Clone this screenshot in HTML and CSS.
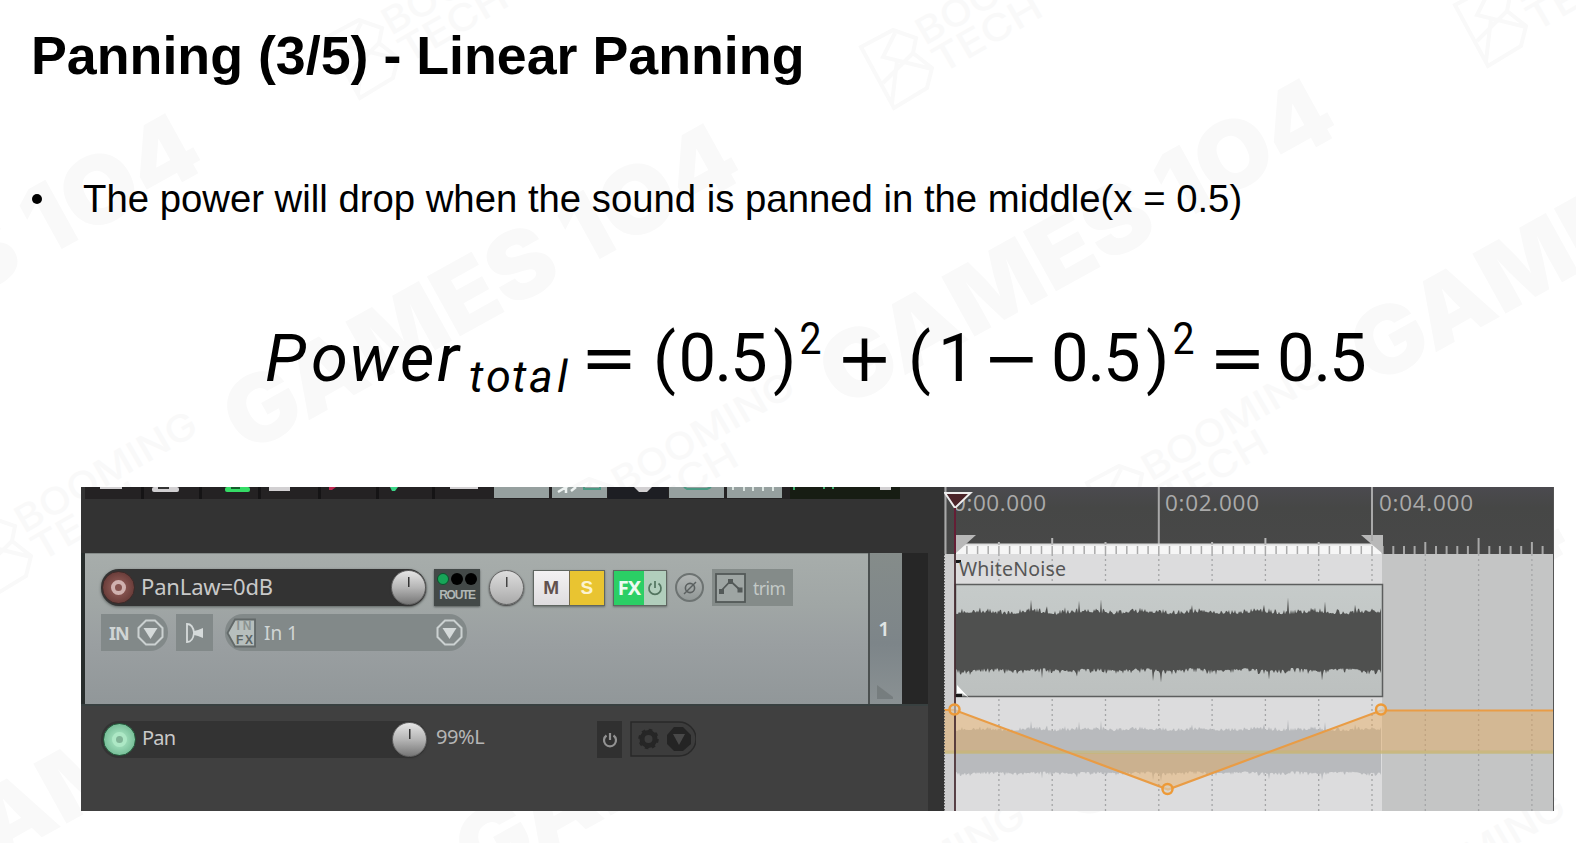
FILE: index.html
```html
<!DOCTYPE html>
<html lang="en">
<head>
<meta charset="utf-8">
<title>Panning (3/5) - Linear Panning</title>
<link rel="stylesheet" href="styles.css">
</head>
<body>
<svg class="watermark" width="1576" height="843" viewBox="0 0 1576 843" aria-hidden="true">
  <defs>
    <g id="games"><text class="wm-games" x="0" y="0" textLength="572" lengthAdjust="spacingAndGlyphs">GAMES 1O4</text></g>
    <g id="brand">
      <path class="wm-logo" d="M0 2L32 -15L55 -7L52 8L71 23L66 43L33 63zM34 -12L22 12L71 24M52 8L22 38M36 16L31 58"/>
      <g transform="translate(64 1) rotate(-30)">
        <text class="wm-booming" x="0" y="0" textLength="204" lengthAdjust="spacingAndGlyphs">BOOMING</text>
        <text class="wm-booming" x="0" y="33" textLength="120" lengthAdjust="spacingAndGlyphs">TECH</text>
      </g>
    </g>
  </defs>
  <use href="#games" transform="translate(-292 445) rotate(-29)"/>
  <use href="#games" transform="translate(246 455) rotate(-29)"/>
  <use href="#games" transform="translate(842 410) rotate(-29)"/>
  <use href="#games" transform="translate(1373 387) rotate(-29)"/>
  <use href="#games" transform="translate(-66 897) rotate(-29)"/>
  <use href="#games" transform="translate(478 889) rotate(-29)"/>
  <use href="#games" transform="translate(1073 826) rotate(-29)"/>
  <use href="#brand" x="861" y="45"/>
  <use href="#brand" x="1455" y="3"/>
  <use href="#brand" x="327" y="35"/>
  <use href="#brand" x="557" y="494"/>
  <use href="#brand" x="1087" y="481"/>
  <use href="#brand" x="-40" y="533"/>
  <use href="#brand" x="788" y="923"/>
  <use href="#brand" x="1328" y="915"/>
</svg>

<main class="slide">
  <h1 class="title">Panning (3/5) - Linear Panning</h1>
  <ul class="points">
    <li class="point"><span class="dot"></span>The power will drop when the sound is panned in the middle(x = 0.5)</li>
  </ul>

  <svg class="formula" width="1120" height="110" viewBox="260 300 1120 110">
    <text class="var" y="381" x="265 311 349 400 437">Power</text>
    <text class="sub" y="392" x="469 486 512 529 557">total</text>
    <text class="op" y="381" x="580.5">=</text>
    <text class="num" y="381" x="653 678.5 714.5 730 773">(0.5)</text>
    <text class="sup" y="354" x="799.500" textLength="22" lengthAdjust="spacingAndGlyphs">2</text>
    <text class="op" y="381" x="836">+</text>
    <text class="num" y="381" x="908 938">(1</text>
    <text class="op" y="381" x="983">−</text>
    <text class="num" y="381" x="1051 1087.5 1103 1146">0.5)</text>
    <text class="sup" y="354" x="1172.500" textLength="22" lengthAdjust="spacingAndGlyphs">2</text>
    <text class="op" y="381" x="1209">=</text>
    <text class="num" y="381" x="1277 1313.5 1329">0.5</text>
  </svg>

  <section class="daw">
    <div class="tracks">
      <svg class="toolbar" width="863" height="12" viewBox="81 487 863 12">
        <rect x="81" y="487" width="863" height="12" fill="#333"/>
        <rect x="85" y="487" width="815" height="12" fill="#242223"/>
        <rect x="790" y="487" width="110" height="12" fill="#171d13"/>
        <g fill="#151415"><rect x="141" y="487" width="3" height="12"/><rect x="199" y="487" width="3" height="12"/><rect x="258" y="487" width="3" height="12"/><rect x="318" y="487" width="3" height="12"/><rect x="376" y="487" width="3" height="12"/><rect x="432" y="487" width="3" height="12"/></g>
        <g fill="#96a09f"><rect x="494" y="487" width="55" height="11"/><rect x="552" y="487" width="55" height="11"/><rect x="669" y="487" width="55" height="11"/><rect x="727" y="487" width="55" height="11"/></g>
        <rect x="608" y="487" width="60" height="12" fill="#1d1e23"/>
        <g fill="#d2d0d2"><rect x="100" y="487" width="22" height="2"/><rect x="152" y="487" width="27" height="5" rx="2"/><rect x="269" y="487" width="21" height="4"/><rect x="450" y="487" width="28" height="2"/><path d="M634 487h18l-5 5h-8z"/><rect x="880" y="487" width="11" height="3"/></g>
        <rect x="158" y="487" width="11" height="2" fill="#333"/>
        <rect x="225" y="487" width="25" height="5" rx="2" fill="#35dc66"/><rect x="231" y="487" width="9" height="2" fill="#165c2c"/>
        <path d="M329 487h7l-4 3h-3z" fill="#bd2851"/><path d="M390 487h8l-3 4h-3z" fill="#3bd587"/>
        <path d="M558 492l10-6M566 487v6M571 491l5-4" stroke="#edf2f1" stroke-width="2.5" fill="none"/>
        <path d="M584 487v2h16v-2M684 487l3 2h20l4-2" stroke="#4b9983" stroke-width="2" fill="none"/>
        <path d="M733 487v3M744 487v4M753 487v4M763 487v4M773 487v4" stroke="#dce6e2" stroke-width="2"/>
        <path d="M794 487v3M824 487v2M833 487v2" stroke="#3cae6c" stroke-width="2"/>
      </svg>

      <div class="track">
        <div class="track-body">
          <div class="row">
            <div class="name">
              <span class="rec"><i></i></span>
              <span class="label">PanLaw=0dB</span>
              <span class="knob"></span>
            </div>
            <div class="route"><div class="leds"><i class="on"></i><i></i><i></i></div><span>ROUTE</span></div>
            <span class="knob pale"></span>
            <div class="pair"><b class="mute">M</b><b class="solo">S</b></div>
            <div class="fx"><b>FX</b>
              <span><svg width="16" height="16" viewBox="0 0 16 16"><path d="M4.5 3.5A6 6 0 1 0 11.5 3.5M8 1V8" fill="none" stroke="#52745f" stroke-width="1.7"/></svg></span>
            </div>
            <div class="phase"><svg width="16" height="16" viewBox="0 0 16 16"><circle cx="8" cy="8" r="4.6" fill="none" stroke="#5b6060" stroke-width="1.6"/><path d="M2 14L14 2" stroke="#5b6060" stroke-width="1.4"/></svg></div>
            <div class="trim">
              <svg width="31" height="30" viewBox="0 0 31 30"><rect x="1" y="1" width="29" height="28" fill="#9ea5a3" stroke="#535958" stroke-width="1.8"/><path d="M6 18L15.500 8L25 17" fill="none" stroke="#535958" stroke-width="1.8"/><path d="M4 16h5v5H4zM13 6h5v5h-5zM22.500 14.500h5v5h-5z" fill="#535958"/></svg>
              <span>trim</span>
            </div>
          </div>
          <div class="row second">
            <div class="in"><b>IN</b><svg class="drop" width="27" height="27" viewBox="0 0 27 27"><path d="M9 1.500h9l7.500 7.500v9L18 25.500H9L1.500 18V9z"/><path class="tri" d="M6.500 9h14l-7 11z"/></svg></div>
            <div class="monitor"><svg width="19" height="22" viewBox="0 0 19 22"><path d="M2 2q6 0 7 9q-1 9-7 9z" fill="none" stroke="#d5dada" stroke-width="1.800"/><path d="M9 9l4-1 5-2v10l-5-2-4-1z" fill="#d5dada"/></svg></div>
            <div class="input">
              <div class="infx"><svg width="31" height="30" viewBox="0 0 31 30"><path d="M9 1.500H29V28.500H9L1.500 15z" fill="#b7bfbd" stroke="#626969" stroke-width="1.800"/><text x="10.500" y="12" class="tiny light" textLength="15">IN</text><text x="10" y="26" class="tiny" textLength="17">FX</text></svg></div>
              <span>In 1</span>
              <svg class="drop" width="27" height="27" viewBox="0 0 27 27"><path d="M9 1.500h9l7.500 7.500v9L18 25.500H9L1.500 18V9z"/><path class="tri" d="M6.500 9h14l-7 11z"/></svg>
            </div>
          </div>
        </div>
        <div class="track-number"><span>1</span><svg width="18" height="14" viewBox="0 0 18 14"><path d="M1 0l16 12v2H1z" fill="#6d7475"/></svg></div>
        <div class="meter"></div>
      </div>

      <div class="envelope">
        <div class="name">
          <span class="rec armed"><i></i></span>
          <span class="label">Pan</span>
          <span class="knob"></span>
        </div>
        <span class="value">99%L</span>
        <div class="bypass"><svg width="16" height="16" viewBox="0 0 16 16"><path d="M4.500 3.500A6 6 0 1 0 11.500 3.500M8 1V8" fill="none" stroke="#929292" stroke-width="2.200"/></svg></div>
        <div class="options">
          <svg width="66" height="36" viewBox="0 0 66 36"><path d="M1 1H49A17 17 0 0 1 49 35H1z" fill="#3c3c3c" stroke="#292929" stroke-width="1.500"/><circle cx="18.500" cy="18" r="6.500" fill="none" stroke="#262626" stroke-width="5"/><circle cx="18.500" cy="18" r="9" fill="none" stroke="#262626" stroke-width="2.500" stroke-dasharray="3.500 3.570"/><path d="M44 6h9l8 8v9l-8 7h-9l-7-7v-9z" fill="#242424"/><path d="M43 13h12l-6 11z" fill="#484848"/></svg>
        </div>
      </div>
    </div>

    <svg class="timeline" width="610" height="324" viewBox="944 487 610 324">
      <defs>
        <linearGradient id="ruler" x1="0" y1="0" x2="0" y2="1"><stop offset="0" stop-color="#4b4a4f"/><stop offset=".3" stop-color="#464746"/><stop offset="1" stop-color="#484848"/></linearGradient>
        <linearGradient id="item" x1="0" y1="0" x2="0" y2="1"><stop offset="0" stop-color="#c6cbca"/><stop offset="1" stop-color="#bcc0bf"/></linearGradient>
      </defs>
      <rect x="944" y="487" width="610" height="67" fill="url(#ruler)"/>
      <rect x="944" y="554" width="610" height="257" fill="#c4c5c5"/>
      <rect x="944" y="554" width="12" height="257" fill="#cdcdce"/>
      <rect x="955" y="554" width="427" height="257" fill="#dcdcdd"/>
      <g id="grid" class="grid"></g>
      <path d="M945.500 487V554M1158.800 487V552M1372 487V546" stroke="#a9a9a9" stroke-width="2"/>
      <text class="time" x="953" y="511" textLength="93">0:00.000</text>
      <text class="time" x="1165" y="511" textLength="94">0:02.000</text>
      <text class="time" x="1379" y="511" textLength="94">0:04.000</text>
      <rect x="956" y="544" width="426" height="10" fill="#f6f6f6"/>
      <path d="M956 544.500H1382" stroke="#ddd" stroke-width="2"/>
      <g id="ticks"></g>
      <path d="M956 535H976L956 553z" fill="#b8b8b8"/><path d="M1361 535H1383V554z" fill="#b8b8b8"/>
      <path d="M1372 487V541" stroke="#a9a9a9" stroke-width="2"/>
      <rect x="955.500" y="584.500" width="427" height="112" fill="url(#item)" stroke="#5c5e5e" stroke-width="1.500"/>
      <path id="wave" fill="#4f504f"/>
      <path id="ghost" fill="#b8babd"/>
      <path d="M944 710H954.500L1071 753H944zM1071 753L1168 789.500L1267 753zM1267 753L1381 710.500H1554V753z" fill="#efa13e" fill-opacity=".36"/>
      <rect x="944" y="750.500" width="610" height="3.500" fill="#c4b875" fill-opacity=".6"/>
      <path d="M944 710H954.500L1168 789.500L1381 710.500H1554" fill="none" stroke="#e99c45" stroke-width="2.200"/>
      <path d="M955 508V811" stroke="#42262c" stroke-width="1.700"/>
      <path d="M956 561.500H961M956 695.500H962" stroke="#171717" stroke-width="3"/>
      <path d="M957 685v8h5l7 5z" fill="#fff"/>
      <text class="clip" x="959" y="575.500" textLength="107">WhiteNoise</text>
      <path d="M945 493H970.500L955 508z" fill="#4b2429" stroke="#eee" stroke-width="2"/>
      <path d="M955 508V553" stroke="#641e35" stroke-width="2"/>
      <g fill="#d9d0c0" fill-opacity=".6" stroke="#ed9a38" stroke-width="2.500"><circle cx="954.500" cy="709.500" r="5"/><circle cx="1167.500" cy="789" r="5"/><circle cx="1381" cy="709.500" r="5"/></g>
      <path d="M944.500 554V811" stroke="#555" stroke-width="1" stroke-dasharray="1.500 1.500"/>
      <path d="M1553.500 487V811" stroke="#555" stroke-width="1"/>
    </svg>
  </section>
</main>
<script src="timeline.js"></script>
</body>
</html>
```
FILE: styles.css
```css
* { box-sizing: border-box; }
body {
  margin: 0;
  width: 1576px;
  height: 843px;
  overflow: hidden;
  background: #fff;
  color: #000;
  font-family: "Liberation Sans", Arial, sans-serif;
}
svg { display: block; flex: none; }

.watermark { position: absolute; left: 0; top: 0; z-index: -1; }
.wm-games { font: 900 94px Inter, sans-serif; fill: #f9f9f9; }
.wm-booming { font: 500 37px Inter, sans-serif; fill: #f9f9f9; }
.wm-logo { fill: none; stroke: #f9f9f9; stroke-width: 4; }

.slide { display: flex; flex-direction: column; height: 843px; }
.title {
  margin: 24px 0 0 31px;
  font-size: 53.75px;
  line-height: 62px;
  font-weight: 700;
  white-space: nowrap;
}
.points { list-style: none; margin: 91px 0 0; padding: 0 0 0 32px; }
.point {
  display: flex;
  align-items: center;
  font-size: 38.3px;
  line-height: 44px;
  white-space: nowrap;
}
.dot { width: 10px; height: 10px; margin-right: 41px; border-radius: 50%; background: #000; }

.formula { margin: 79px 0 0 260px; }
.formula text { fill: #000; }
.var { font: italic 400 67px Roboto, sans-serif; }
.sub { font: italic 400 45px Roboto, sans-serif; }
.num { font: 400 67px Roboto, sans-serif; }
.sup { font: 400 45px Roboto, sans-serif; }
.op { font: 400 68px "DejaVu Sans", sans-serif; }

.daw {
  display: grid;
  grid-template-columns: 863px 610px;
  width: 1473px;
  height: 324px;
  margin: 77px 0 0 81px;
  background: #333;
  color: #c9c9c9;
  font-family: "Noto Sans", "Open Sans", sans-serif;
  overflow: hidden;
}
.tracks { display: flex; flex-direction: column; border-bottom: 1px solid #2c2c2c; }

.track { display: flex; height: 151px; margin-top: 54px; border-left: 4px solid #282d2c; }
.track-body {
  width: 783px;
  padding: 15px 0 0 16px;
  background: linear-gradient(#a7adab 0, #a0a6a5 35%, #9a9fa1 60%, #919799 100%);
  border-top: 1px solid #858b89;
}
.row { display: flex; align-items: center; height: 37px; }
.second { margin-top: 8px; }
.name {
  display: flex;
  align-items: center;
  width: 325px;
  height: 37px;
  border-radius: 18px;
  background: #333;
}
.track .name { box-shadow: 0 1px 3px #5c6260; }
.rec {
  display: grid;
  place-items: center;
  width: 33px;
  height: 33px;
  margin-left: 1px;
  border-radius: 50%;
  background: radial-gradient(circle, #875450 30%, #643835 80%);
  border: 1px solid #3d2a29;
}
.rec i { width: 15px; height: 15px; border: 4px solid #d0b1af; border-radius: 50%; }
.rec.armed { margin-left: 2px; background: radial-gradient(circle, #9bdbb7 30%, #6db58f 85%); border-color: #235b3b; }
.rec.armed i { border-color: #ade8c5; background: #81b497; }
.label { margin: 0 0 3px 6px; font-size: 22px; line-height: 30px; letter-spacing: -0.15px; white-space: nowrap; }
.knob {
  width: 35px;
  height: 35px;
  margin-left: auto;
  border-radius: 50%;
  border: 1px solid #626262;
  background: linear-gradient(#333, #333) 50% 6px / 1.5px 10px no-repeat, linear-gradient(#e5e5e5, #b5b5b5 50%, #777);
  box-shadow: 0 1px 2px #333;
}
.knob.pale {
  margin-left: 9px;
  background: linear-gradient(#444, #444) 50% 6px / 1.5px 10px no-repeat, linear-gradient(#ddd, #c4c4c4 50%, #aaa);
}
.route {
  width: 46px;
  height: 37px;
  margin-left: 8px;
  padding-top: 4px;
  background: #434948;
  box-shadow: 0 1px 2px #555b5a;
  text-align: center;
}
.leds { display: flex; justify-content: center; gap: 2px; }
.leds i { width: 12px; height: 12px; border-radius: 50%; background: #000; }
.leds i.on { background: #17a558; border: 1px solid #0b532d; }
.route span { display: block; font: 700 12px/20px "Liberation Sans", sans-serif; letter-spacing: -1.3px; color: #b0b6b4; }
.pair, .fx { display: flex; border: 1.5px solid #5f6661; height: 36px; box-shadow: 0 1px 2px #666c6a; }
.pair { width: 72px; margin-left: 9px; }
.pair b { flex: 1; font: 700 19px/33px "Liberation Sans", sans-serif; text-align: center; }
.mute { background: linear-gradient(#f3f2f3, #dedcde); color: #61524e; border-right: 1px solid #746a4c; }
.solo { background: #e9c431; color: #fcf3d0; }
.fx { width: 54px; margin-left: 8px; }
.fx b { width: 30px; background: #2bcf65; color: #ecfbf1; font: 700 20px/33px "Noto Sans", sans-serif; letter-spacing: -1px; text-align: center; }
.fx span { flex: 1; display: grid; place-items: center; background: #b1cebc; }
.phase {
  display: grid;
  place-items: center;
  width: 29px;
  height: 29px;
  margin-left: 8px;
  border: 2px solid #6d7372;
  border-radius: 50%;
  background: linear-gradient(#b1b5b4, #929897);
}
.trim { display: flex; align-items: center; width: 81px; height: 37px; margin-left: 8px; padding-left: 3px; background: #848b89; }
.trim span { margin-left: 7px; color: #c3c9c7; font-size: 17.5px; letter-spacing: -.5px; }

.in, .monitor, .input { display: flex; align-items: center; height: 37px; background: #828989; color: #d0d5d5; }
.in { width: 67px; padding-left: 8px; border-radius: 0 18px 18px 0; }
.in b { width: 28px; font-size: 18px; line-height: 24px; letter-spacing: -1px; }
.drop path { fill: none; stroke: #cbd1d1; stroke-width: 2; }
.drop .tri { fill: #d5dada; stroke: none; }
.monitor { width: 37px; margin-left: 8px; justify-content: center; }
.input { width: 242px; margin-left: 12px; padding: 0 4px 0 1px; border-radius: 18px; font-size: 19px; line-height: 24px; }
.infx { margin-right: 7px; }
.input .drop { margin-left: auto; }
.tiny { font: 700 12px "Liberation Sans", sans-serif; fill: #5d6564; }
.tiny.light { fill: #8b9391; }

.track-number {
  display: flex;
  flex-direction: column;
  align-items: center;
  width: 34px;
  padding-top: 60px;
  border-left: 2px solid #4b5050;
  background: linear-gradient(#858c8a, #7d8589 60%, #8a9193);
  color: #e0e4e4;
  font-size: 20px;
  font-weight: 600;
  line-height: 32px;
}
.track-number span { padding-right: 4px; }
.track-number svg { margin: 40px 2px 0 0; opacity: .65; }
.meter { width: 26px; background: #262626; }

.envelope {
  display: flex;
  align-items: flex-start;
  width: 847px;
  height: 107px;
  padding: 15px 0 0 20px;
  background: #404040;
  border-top: 2px solid #384040;
}
.envelope .name { width: 326px; border-radius: 18px; }
.envelope .label { font-size: 20px; letter-spacing: -.8px; }
.value { width: 158px; margin-left: 9px; font-size: 20px; line-height: 32px; letter-spacing: -.4px; color: #b5b5b5; }
.bypass { display: grid; place-items: center; width: 25px; height: 37px; margin-left: 3px; background: #303030; }
.options { margin-left: 8px; }

.grid path { fill: none; stroke: #a4a5a6; stroke-width: 1.3; stroke-dasharray: 2 3; }
.time { font: 400 22.5px "Open Sans", sans-serif; fill: #aaa; }
.clip { font: 400 19.5px "Noto Sans", sans-serif; fill: #565656; }
```
FILE: timeline.js
```js
(function () {
  const NS = "http://www.w3.org/2000/svg";
  const ORIGIN = 945.6;
  const STEP = 10.66;

  function line(parent, d, stroke, width) {
    const p = document.createElementNS(NS, "path");
    p.setAttribute("d", d);
    if (stroke) {
      p.setAttribute("stroke", stroke);
      p.setAttribute("stroke-width", width);
    }
    parent.appendChild(p);
  }

  // Beat grid behind the clips
  const grid = document.getElementById("grid");
  for (let i = 1; i < 12; i++) {
    line(grid, `M${(ORIGIN + i * STEP * 5).toFixed(1)} 554V811`);
  }

  // Ruler ticks
  const ticks = document.getElementById("ticks");
  for (let i = 2; i < 57; i++) {
    const x = (ORIGIN + i * STEP).toFixed(1);
    const tickTop = i % 20 === 0 ? 546 : i % 10 === 0 ? 538 : i % 5 === 0 ? 542 : 546;
    if (x < 1382) {
      line(ticks, `M${x} 546V554`, "#aaa", 1.5);
      if (tickTop < 546) line(ticks, `M${x} ${tickTop}V545`, "#b8b8b8", 2);
    } else {
      line(ticks, `M${x} ${tickTop}V554`, "#a8a8a8", 2);
    }
  }

  // Noise waveform with a few fixed peaks
  let seed = 77;
  function rnd() {
    seed = (seed * 16807) % 2147483647;
    return seed / 2147483647;
  }
  const peaksTop = { 1031: 10, 1047: 7, 1065: 7, 1079: 8, 1101: 11, 1192: 7, 1264: 7, 1288: 14, 1325: 8, 1355: 9 };
  const peaksBottom = { 1042: 9, 1077: 7, 1153: 8, 1161: 8, 1269: 8, 1322: 9 };
  const upper = [];
  const lower = [];
  for (let x = 956; x <= 1381; x += 1) {
    upper.push([x, rnd() ** 2 * 5 + Math.sin(x / 9) + (peaksTop[x] || 0)]);
    lower.push([x, rnd() ** 2 * 5 + Math.sin(x / 8) + (peaksBottom[x] || 0)]);
  }
  function wave(y0, y1, k) {
    const up = upper.map(([x, v]) => `${x} ${(y0 - v * k).toFixed(1)}`).join("L");
    const down = lower.slice().reverse().map(([x, v]) => `${x} ${(y1 + v * k).toFixed(1)}`).join("L");
    return `M${up}L${down}z`;
  }
  document.getElementById("wave").setAttribute("d", wave(613.5, 669, 1));
  document.getElementById("ghost").setAttribute("d", wave(730.5, 772, 0.7));
})();
```
